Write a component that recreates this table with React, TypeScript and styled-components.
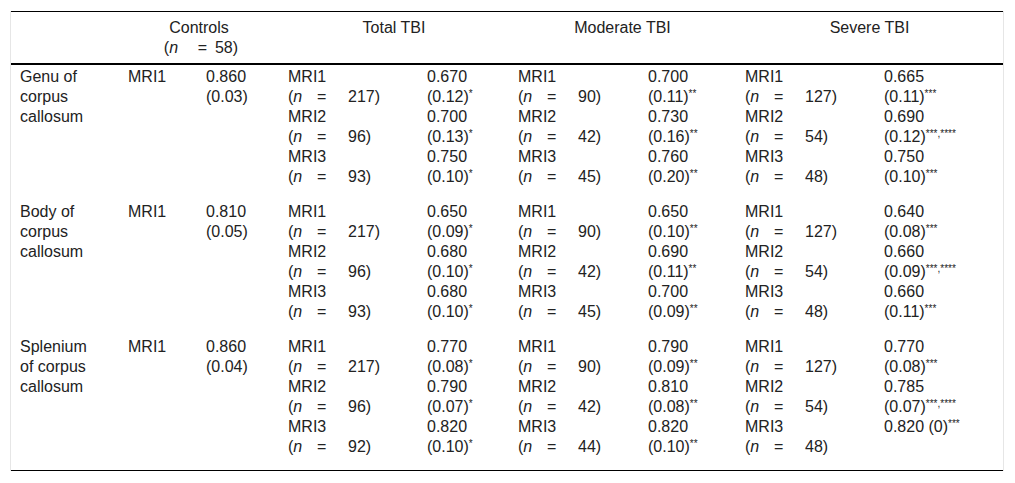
import React from 'react';
import styled, { createGlobalStyle } from 'styled-components';

const GlobalStyle = createGlobalStyle`
  body {
    margin: 0;
    background: #fff;
    font-family: "Liberation Sans", Arial, sans-serif;
    font-size: 16px;
    color: #222;
  }
`;

const COLUMNS = '108px 78px 82px 139px 91px 130px 97px 139px 128px';

const Frame = styled.div`
  margin: 11px 0 0 10px;
  width: 992px;
  border-left: 1px solid #e6e6e6;
  border-right: 1px solid #e6e6e6;
`;

const Table = styled.div`
  border-top: 1px solid #000;
  border-bottom: 1px solid #000;
  line-height: 20px;
`;

const Row = styled.div<{ $head?: boolean }>`
  display: grid;
  grid-template-columns: ${COLUMNS};
  padding: ${({ $head }) => ($head ? '6px 0 5px' : '2px 0 13px')};
  border-bottom: ${({ $head }) => ($head ? '2px solid #000' : 'none')};
`;

const HeadCell = styled.div<{ $span?: number }>`
  grid-column: span ${({ $span }) => $span || 1};
  padding: 0 9px;
  text-align: center;
`;

const HeadCount = styled.div`
  display: flex;
  justify-content: center;
  padding-right: 8px;
  white-space: nowrap;
`;

const Cell = styled.div<{ $wrap?: boolean }>`
  padding: 0 ${({ $wrap }) => ($wrap ? '20px' : '9px')} 0 9px;
`;

const Line = styled.div`
  height: 20px;
  white-space: nowrap;
`;

const NLabel = styled.span<{ $wide?: boolean }>`
  display: inline-block;
  width: ${({ $wide }) => ($wide ? '38px' : '29px')};
`;

const Eq = styled.span<{ $wide?: boolean }>`
  display: inline-block;
  width: ${({ $wide }) => ($wide ? '25px' : '31px')};
`;

const Sup = styled.sup`
  font-size: 10px;
  line-height: 0;
  vertical-align: 5px;
`;

type Entry = { n: number; mean: string; sd: string; stars: string; inline?: boolean };
type Group = { entries: Entry[] };
type Region = { name: string; control: { mean: string; sd: string }; groups: Group[] };

const e = (n: number, mean: string, sd: string, stars: string, inline?: boolean): Entry => ({
  n,
  mean,
  sd,
  stars,
  inline,
});

const regions: Region[] = [
  {
    name: 'Genu of corpus callosum',
    control: { mean: '0.860', sd: '(0.03)' },
    groups: [
      { entries: [e(217, '0.670', '(0.12)', '*'), e(96, '0.700', '(0.13)', '*'), e(93, '0.750', '(0.10)', '*')] },
      { entries: [e(90, '0.700', '(0.11)', '**'), e(42, '0.730', '(0.16)', '**'), e(45, '0.760', '(0.20)', '**')] },
      {
        entries: [
          e(127, '0.665', '(0.11)', '***'),
          e(54, '0.690', '(0.12)', '***,****'),
          e(48, '0.750', '(0.10)', '***'),
        ],
      },
    ],
  },
  {
    name: 'Body of corpus callosum',
    control: { mean: '0.810', sd: '(0.05)' },
    groups: [
      { entries: [e(217, '0.650', '(0.09)', '*'), e(96, '0.680', '(0.10)', '*'), e(93, '0.680', '(0.10)', '*')] },
      { entries: [e(90, '0.650', '(0.10)', '**'), e(42, '0.690', '(0.11)', '**'), e(45, '0.700', '(0.09)', '**')] },
      {
        entries: [
          e(127, '0.640', '(0.08)', '***'),
          e(54, '0.660', '(0.09)', '***,****'),
          e(48, '0.660', '(0.11)', '***'),
        ],
      },
    ],
  },
  {
    name: 'Splenium of corpus callosum',
    control: { mean: '0.860', sd: '(0.04)' },
    groups: [
      { entries: [e(217, '0.770', '(0.08)', '*'), e(96, '0.790', '(0.07)', '*'), e(92, '0.820', '(0.10)', '*')] },
      { entries: [e(90, '0.790', '(0.09)', '**'), e(42, '0.810', '(0.08)', '**'), e(44, '0.820', '(0.10)', '**')] },
      {
        entries: [
          e(127, '0.770', '(0.08)', '***'),
          e(54, '0.785', '(0.07)', '***,****'),
          e(48, '0.820', '(0)', '***', true),
        ],
      },
    ],
  },
];

const Count = ({ n, wide }: { n: number; wide?: boolean }) => (
  <>
    <NLabel $wide={wide}>
      (<i>n</i>
    </NLabel>
    <Eq $wide={wide}>=</Eq>
    <span>{n})</span>
  </>
);

const GroupCells = ({ group }: { group: Group }) => (
  <>
    <Cell>
      {group.entries.map((en, i) => (
        <React.Fragment key={i}>
          <Line>MRI{i + 1}</Line>
          <Line>
            <Count n={en.n} />
          </Line>
        </React.Fragment>
      ))}
    </Cell>
    <Cell>
      {group.entries.map((en, i) =>
        en.inline ? (
          <React.Fragment key={i}>
            <Line>
              {en.mean} {en.sd}
              <Sup>{en.stars}</Sup>
            </Line>
            <Line />
          </React.Fragment>
        ) : (
          <React.Fragment key={i}>
            <Line>{en.mean}</Line>
            <Line>
              {en.sd}
              <Sup>{en.stars}</Sup>
            </Line>
          </React.Fragment>
        )
      )}
    </Cell>
  </>
);

const App = () => (
  <>
    <GlobalStyle />
    <Frame>
      <Table>
        <Row $head>
          <HeadCell />
          <HeadCell $span={2}>
            Controls
            <HeadCount>
              <Count n={58} wide />
            </HeadCount>
          </HeadCell>
          <HeadCell $span={2}>Total TBI</HeadCell>
          <HeadCell $span={2}>Moderate TBI</HeadCell>
          <HeadCell $span={2}>Severe TBI</HeadCell>
        </Row>
        {regions.map((r) => (
          <Row key={r.name}>
            <Cell $wrap>{r.name}</Cell>
            <Cell>MRI1</Cell>
            <Cell>
              {r.control.mean}
              <br />
              {r.control.sd}
            </Cell>
            {r.groups.map((g, i) => (
              <GroupCells key={i} group={g} />
            ))}
          </Row>
        ))}
      </Table>
    </Frame>
  </>
);

export default App;
